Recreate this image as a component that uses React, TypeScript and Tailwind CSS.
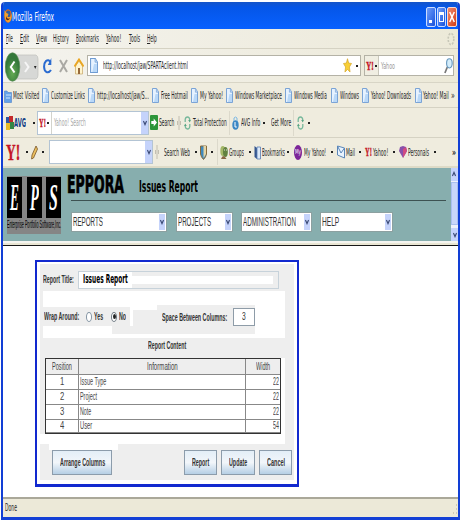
import React, { useLayoutEffect, useRef } from "react";
import { clsx } from "clsx";

/* One line of text, condensed horizontally to fill the width of its box. */
function T({ className, children }: { className?: string; children: React.ReactNode }) {
  const box = useRef<HTMLDivElement>(null);
  const inner = useRef<HTMLSpanElement>(null);
  useLayoutEffect(() => {
    const fit = () => {
      if (!box.current || !inner.current) return;
      inner.current.style.transform = `scaleX(${box.current.clientWidth / inner.current.offsetWidth})`;
    };
    fit();
    document.fonts?.ready.then(fit);
  }, []);
  return (
    <div ref={box} className={clsx("flex shrink-0 items-center whitespace-nowrap", className)}>
      <span ref={inner} className="block shrink-0 origin-left">{children}</span>
    </div>
  );
}

const Dot = ({ className }: { className?: string }) => (
  <span className={clsx("h-[2px] w-[2px] shrink-0 bg-[#222]", className)} />
);

const PageIcon = ({ className }: { className?: string }) => (
  <svg viewBox="0 0 7 15" preserveAspectRatio="none" className={clsx("h-[15px] w-[7px] shrink-0", className)}>
    <path d="M.5.5H4.6L6.5 4V14.5H.5Z" fill="#e6f2ff" stroke="#6e9bd2" strokeWidth=".9" />
    <path d="M4.4.8V4.2H6.3" fill="#bcd8f6" stroke="#6e9bd2" strokeWidth=".6" />
    <path d="M3.5 6H6V14H2Z" fill="#b9d8f8" />
  </svg>
);

const YMark = ({ className }: { className?: string }) => (
  <span className={clsx("flex shrink-0 items-center font-['Liberation_Serif',serif] font-bold text-[#c41425] [-webkit-text-stroke:0.4px_#c41425]", className)}>
    <T className="w-full">Y!</T>
  </span>
);

const Arrow = ({ className }: { className?: string }) => (
  <span className={clsx("flex shrink-0 items-center justify-center bg-[#c5d3fb]", className)}>
    <svg viewBox="0 0 4 6" preserveAspectRatio="none" className="h-[6px] w-[4px]">
      <path d="M.4 1 2 4.6 3.6 1" fill="none" stroke="#3d4c78" strokeWidth="1.2" />
    </svg>
  </span>
);

const Grip = ({ className }: { className?: string }) => (
  <svg viewBox="0 0 4 14" className={clsx("h-[14px] w-[4px] shrink-0", className)}>
    <path d="M2 0V14M.5 5V9M3.5 5V9" stroke="#bdbaac" strokeWidth=".9" />
  </svg>
);

const Recycle = ({ className }: { className?: string }) => (
  <svg viewBox="0 0 7 14" preserveAspectRatio="none" className={clsx("h-[14px] w-[7px] shrink-0", className)}>
    <path d="M1.2 6V3.5Q1.5 1 3.5 1Q5.5 1 5.8 4M5.8 8V10.5Q5.5 13 3.5 13Q1.5 13 1.2 10" fill="none" stroke="#77b89b" strokeWidth="1.3" />
    <path d="M4.2 4H7L5.7 6.5ZM0 10H2.8L1.3 7.5Z" fill="#58a583" />
  </svg>
);

function Select({ className, label, textWidth }: { className?: string; label: string; textWidth: string }) {
  return (
    <div className={clsx("flex h-[20px] shrink-0 border border-[#8ca0a0] bg-white text-[12px] text-[#333]", className)}>
      <T className={clsx("ml-[1px] h-[18px]", textWidth)}>{label}</T>
      <Arrow className="my-px ml-auto mr-px h-[16px] w-[6px]" />
    </div>
  );
}

function LogoLetter({ ch }: { ch: string }) {
  return (
    <div className="flex h-[41px] w-[15px] justify-center bg-black font-['Liberation_Serif',serif] text-[37px] font-bold italic text-white">
      <T className="h-[41px] w-[9px]">{ch}</T>
    </div>
  );
}

function Button({ className, text, label }: { className?: string; text: string; label: string }) {
  return (
    <button className={clsx("flex h-[25px] shrink-0 justify-center border border-[#8c9cab] bg-linear-to-b from-[#e3eef7] via-[#f2f6fa] to-[#b6cfe5] text-[11px] font-bold text-[#333]", className)}>
      <T className={clsx("h-[23px]", text)}>{label}</T>
    </button>
  );
}

const rows = [
  ["1", "Issue Type", "w-[26px]", "22"],
  ["2", "Project", "w-[17px]", "22"],
  ["3", "Note", "w-[11px]", "22"],
  ["4", "User", "w-[12px]", "54"],
];

export default function App() {
  return (
    <div className="h-[523px] w-[462px] overflow-hidden bg-white pl-[1px] pt-[2px] font-['DejaVu_Sans_Condensed','DejaVu_Sans',sans-serif] text-[10.5px] leading-none text-[#252525]">
      <div className="flex h-[518px] w-[459px] flex-col overflow-hidden rounded-t-[4px] border-x-2 border-b-[3px] border-[#123fd5] bg-white">
        {/* title bar */}
        <header className="flex h-[27px] shrink-0 bg-linear-to-b from-[#1454c8] via-[#0556e8] via-20% to-[#0861ff] pl-[1px] text-white">
          <svg viewBox="0 0 8 14" preserveAspectRatio="none" className="mt-[7px] h-[14px] w-[8px]">
            <ellipse cx="4" cy="7" rx="3.8" ry="6.7" fill="#e56b16" />
            <ellipse cx="4.2" cy="5" rx="2.2" ry="3.4" fill="#315b9b" />
            <path d="M.5 1 2.5 4 4.5 5 3.5 8 6.5 8 7.6 4Q8 13 4 13.6Q0 12 .5 1" fill="#f4a02c" />
            <path d="M2 7Q3 11 6 9Q4 13 2 10Z" fill="#5b2a16" />
          </svg>
          <T className="mt-[3px] h-[26px] w-[42px] text-[11.5px]">Mozilla Firefox</T>
          <div className="ml-auto mr-[1px] mt-[5px] flex gap-[1px]">
            <span className="h-[20px] w-[10px] rounded-[2px] border border-[#cbdcff] bg-linear-to-br from-[#6e9cfa] to-[#1650dc] pl-[2px] pt-[12px]">
              <i className="block h-[3px] w-[3px] bg-white" />
            </span>
            <span className="h-[20px] w-[9px] rounded-[2px] border border-[#cbdcff] bg-linear-to-br from-[#6e9cfa] to-[#1650dc] pl-[1px] pt-[4px]">
              <i className="block h-[10px] w-[5px] border border-t-[3px] border-white" />
            </span>
            <span className="h-[20px] w-[10px] rounded-[2px] border border-[#ffd8cc] bg-linear-to-br from-[#f08a6c] to-[#d13a10]">
              <svg viewBox="0 0 8 18" preserveAspectRatio="none" className="h-full w-full">
                <path d="M1.7 4 6.3 14M6.3 4 1.7 14" stroke="white" strokeWidth="1.5" />
              </svg>
            </span>
          </div>
        </header>

        {/* menu bar */}
        <nav className="flex h-[20px] shrink-0 border-b border-[#d5d2c3] bg-linear-to-r from-[#f4f3ee] to-[#ece9d8] pl-[3px]">
          <T className="w-[7px]"><u>F</u>ile</T>
          <T className="ml-[7px] w-[9px]"><u>E</u>dit</T>
          <T className="ml-[7px] w-[11px]"><u>V</u>iew</T>
          <T className="ml-[6px] w-[16px]">Hi<u>s</u>tory</T>
          <T className="ml-[7px] w-[23px]"><u>B</u>ookmarks</T>
          <T className="ml-[7px] w-[15px]"><u>Y</u>ahoo!</T>
          <T className="ml-[8px] w-[11px]"><u>T</u>ools</T>
          <T className="ml-[7px] w-[10px]"><u>H</u>elp</T>
          <svg viewBox="0 0 8 14" preserveAspectRatio="none" className="ml-auto mr-[3px] mt-[3px] h-[14px] w-[8px]">
            <ellipse cx="4" cy="7" rx="2.8" ry="5.6" fill="none" stroke="#c7c7b8" strokeWidth="1.6" strokeDasharray="2 1.4" />
          </svg>
        </nav>

        {/* navigation bar */}
        <div className="flex h-[34px] shrink-0 items-center border-b border-[#d8d5c6] bg-linear-to-r from-[#f4f3ee] to-[#ece9d8] pl-[2px]">
          <svg viewBox="0 0 34 30" className="mt-[3px] h-[30px] w-[34px] shrink-0 self-start">
            <defs>
              <radialGradient id="green" cx=".5" cy=".7">
                <stop stopColor="#67ac55" /><stop offset="1" stopColor="#34783a" />
              </radialGradient>
            </defs>
            <path d="M11 3H31Q33 4 33 7V23Q33 26 31 27H11Z" fill="#d7d8d6" stroke="#bfc0bc" strokeWidth=".7" />
            <ellipse cx="7.5" cy="15" rx="7.3" ry="14.3" fill="url(#green)" stroke="#5c8b58" strokeWidth=".6" />
            <path d="M9.5 9.5 5.8 15 9.5 20.5" fill="none" stroke="#fff" strokeWidth="2" />
            <path d="M20 10 23.5 15 20 20" fill="none" stroke="#f5f5f5" strokeWidth="2" />
            <path d="M29 14H31.5L30.2 17Z" fill="#222" />
          </svg>
          <svg viewBox="0 0 9 16" preserveAspectRatio="none" className="ml-[4px] h-[16px] w-[9px] shrink-0">
            <path d="M7.5 4Q5.5 1 3 3Q1 5 1.1 9Q1.3 13 3.5 14Q6 15 8 12" fill="none" stroke="#2a6bd0" strokeWidth="2" />
            <path d="M8.3 0V7H4.8Z" fill="#2a6bd0" />
          </svg>
          <svg viewBox="0 0 9 16" preserveAspectRatio="none" className="ml-[7px] h-[16px] w-[9px] shrink-0">
            <path d="M1 2 8 14M8 2 1 14" stroke="#aaa9a4" strokeWidth="2" />
          </svg>
          <svg viewBox="0 0 10 18" preserveAspectRatio="none" className="ml-[6px] h-[18px] w-[10px] shrink-0">
            <path d="M1.5 9V17H8.5V9L5 4Z" fill="#fff4cc" stroke="#c6a566" strokeWidth=".7" />
            <path d="M.5 9.5 5 2.5 9.5 9.5" fill="none" stroke="#eaa622" strokeWidth="1.8" />
            <path d="M4 11H6V17H4Z" fill="#96693b" />
          </svg>
          <div className="ml-[3px] flex h-[21px] w-[274px] shrink-0 items-center border border-[#b4b2a6] bg-white">
            <PageIcon className="ml-[2px] w-[8px]" />
            <T className="ml-[5px] w-[85px]">http://localhost/jaw/SPARTAclient.html</T>
            <svg viewBox="0 0 8 15" preserveAspectRatio="none" className="ml-auto h-[15px] w-[9px]">
              <path d="M4 .7 5 5 7.6 5.5 5.7 9 6.3 14 4 11.5 1.7 14 2.3 9 .4 5.5 3 5Z" fill="#f8cf36" stroke="#d2a020" strokeWidth=".6" />
            </svg>
            <Dot className="ml-[4px] mr-[2px]" />
          </div>
          <div className="ml-[3px] flex h-[21px] w-[90px] shrink-0 items-center border border-[#b4b2a6] bg-white">
            <div className="flex h-full w-[14px] items-center border-r border-[#c9c7bb] bg-[#f0eee2]">
              <YMark className="ml-[1px] w-[8px] text-[13px]" />
              <Dot className="ml-[1px]" />
            </div>
            <T className="ml-[2px] w-[14px] text-[9.5px] text-[#999]">Yahoo</T>
            <svg viewBox="0 0 8 16" preserveAspectRatio="none" className="ml-auto h-[16px] w-[9px]">
              <path d="M3 9 .8 15" stroke="#777" strokeWidth="1.5" />
              <ellipse cx="4.8" cy="5.3" rx="2.5" ry="4.6" fill="#d4edfb" stroke="#6697bd" />
            </svg>
          </div>
        </div>

        {/* bookmarks bar */}
        <div className="flex h-[25px] shrink-0 items-center border-b border-[#d5d2c3] bg-[#efecde] pl-[1px] pt-[1px]">
          <svg viewBox="0 0 8 14" preserveAspectRatio="none" className="h-[14px] w-[8px] shrink-0">
            <path d="M.5 2H3L4 3.5H7.5V13.5H.5Z" fill="#65a2e8" stroke="#4d82c8" strokeWidth=".6" />
            <path d="M2 6H7M2 9H6" stroke="#cfe5ff" />
          </svg>
          <T className="ml-[1px] w-[26px]">Most Visited</T>
          <PageIcon className="ml-[3px]" /><T className="ml-[2px] w-[34px]">Customize Links</T>
          <PageIcon className="ml-[3px]" /><T className="ml-[2px] w-[52px]">http://localhost/jaw/S...</T>
          <PageIcon className="ml-[3px]" /><T className="ml-[2px] w-[27px]">Free Hotmail</T>
          <PageIcon className="ml-[3px]" /><T className="ml-[2px] w-[23px]">My Yahoo!</T>
          <PageIcon className="ml-[3px]" /><T className="ml-[2px] w-[47px]">Windows Marketplace</T>
          <PageIcon className="ml-[3px]" /><T className="ml-[2px] w-[33px]">Windows Media</T>
          <PageIcon className="ml-[4px]" /><T className="ml-[2px] w-[19px]">Windows</T>
          <PageIcon className="ml-[3px]" /><T className="ml-[2px] w-[40px]">Yahoo! Downloads</T>
          <PageIcon className="ml-[4px]" /><T className="ml-[1px] w-[26px]">Yahoo! Mail</T>
          <T className="ml-[2px] w-[4px]">»</T>
        </div>

        {/* AVG toolbar */}
        <div className="flex h-[30px] shrink-0 items-center border-b border-[#d5d2c3] bg-[#efecde] pl-[3px]">
          <svg viewBox="0 0 8 14" preserveAspectRatio="none" className="h-[14px] w-[8px] shrink-0">
            <path d="M0 7H4V14H0Z" fill="#e8b926" /><path d="M0 1H4V7H0Z" fill="#2d54a3" />
            <path d="M3 0H7V6H3Z" fill="#c52a2a" /><path d="M4 6H8V13H4Z" fill="#348645" />
          </svg>
          <T className="w-[12px] text-[13px] font-bold text-[#123e85]">AVG</T>
          <Dot className="ml-[7px]" />
          <div className="ml-[2px] flex h-[24px] w-[112px] shrink-0 items-center border border-[#b3c4d4] bg-white">
            <YMark className="ml-[1px] w-[7px] text-[12px]" />
            <Dot className="ml-[1px]" />
            <span className="ml-[2px] h-full w-px bg-[#d3d3cc]" />
            <T className="ml-[2px] w-[32px] text-[#a8a8a8]">Yahoo! Search</T>
            <Arrow className="ml-auto h-full w-[7px]" />
          </div>
          <svg viewBox="0 0 8 15" preserveAspectRatio="none" className="ml-[1px] h-[15px] w-[8px] shrink-0">
            <rect width="8" height="15" rx="1" fill="#2d9539" />
            <path d="M1.3 6H3.7V3.5L7 7.5 3.7 11.5V9H1.3Z" fill="#fff" />
          </svg>
          <T className="ml-[1px] w-[15px]">Search</T>
          <Grip className="ml-[3px]" />
          <Recycle className="ml-[3px]" />
          <T className="ml-[2px] w-[34px]">Total Protection</T>
          <span className="ml-[2px] h-[24px] w-px bg-[#dcd9cb]" />
          <svg viewBox="0 0 7 14" preserveAspectRatio="none" className="ml-[2px] h-[14px] w-[7px] shrink-0">
            <ellipse cx="3.5" cy="9" rx="3.2" ry="4.7" fill="#3b87c4" />
            <path d="M2 5V2Q3.5 0 5 2V5" fill="none" stroke="#7cb8e3" /><path d="M3 6V11H4.8" stroke="white" fill="none" />
          </svg>
          <T className="ml-[2px] w-[19px]">AVG Info</T>
          <Dot className="ml-[3px]" />
          <T className="ml-[6px] w-[20px]">Get More</T>
          <span className="ml-[2px] h-[26px] w-px bg-[#dcd9cb]" />
          <Recycle className="ml-[3px]" />
          <Dot className="ml-[4px]" />
        </div>

        {/* Yahoo toolbar */}
        <div className="flex h-[30px] shrink-0 items-center border-b-2 border-[#dedbc7] bg-[#efecde] pl-[3px]">
          <YMark className="w-[14px] text-[24px]" />
          <Dot className="ml-[6px]" />
          <svg viewBox="0 0 7 15" preserveAspectRatio="none" className="ml-[3px] h-[15px] w-[7px] shrink-0">
            <path d="M5 1 6.5 4 2.5 13 .6 14 1 10Z" fill="#edc15f" stroke="#765326" strokeWidth=".8" />
          </svg>
          <Dot className="ml-[4px]" />
          <div className="ml-[5px] flex h-[24px] w-[104px] shrink-0 border border-[#b3c4d4] bg-white">
            <Arrow className="ml-auto h-full w-[7px]" />
          </div>
          <Grip className="ml-[2px]" />
          <T className="ml-[5px] w-[26px]">Search Web</T>
          <Dot className="ml-[5px]" />
          <svg viewBox="0 0 7 15" preserveAspectRatio="none" className="ml-[3px] h-[15px] w-[7px] shrink-0">
            <path d="M.5 1H6.5V9Q6 12 3.5 14.5Q1 12 .5 9Z" fill="#3e89bd" stroke="#866b3d" />
            <path d="M3.5 1H6V9Q5 11 3.5 13Z" fill="#e5d5a5" />
          </svg>
          <Dot className="ml-[4px]" />
          <span className="ml-[4px] h-[26px] w-px bg-[#dcd9cb]" />
          <svg viewBox="0 0 8 15" preserveAspectRatio="none" className="ml-[2px] h-[15px] w-[8px] shrink-0">
            <ellipse cx="2.8" cy="6" rx="2.5" ry="5" fill="#a5b868" /><ellipse cx="5.4" cy="7" rx="2.4" ry="5" fill="#62813f" />
            <path d="M1 14Q3 8 6.5 14" fill="#8a6743" /><path d="M4 5H4.8M6 5H6.8" stroke="#fff" />
          </svg>
          <T className="ml-[1px] w-[15px]">Groups</T>
          <Dot className="ml-[5px]" />
          <svg viewBox="0 0 7 15" preserveAspectRatio="none" className="ml-[3px] h-[15px] w-[7px] shrink-0">
            <path d="M.5 1 3 3V14L.5 12Z" fill="#37578e" /><path d="M3 2H6.5V14H3Z" fill="#dce9f8" stroke="#577bb2" strokeWidth=".8" />
          </svg>
          <T className="ml-[1px] w-[23px]">Bookmarks</T>
          <Dot className="ml-[2px]" />
          <span className="ml-[5px] flex h-[15px] w-[8px] shrink-0 items-center rounded-[50%] bg-[#7c2599] text-[7px] text-white">
            <T className="ml-[1px] w-[6px]">My</T>
          </span>
          <T className="ml-[2px] w-[22px]">My Yahoo!</T>
          <Dot className="ml-[5px]" />
          <svg viewBox="0 0 8 14" preserveAspectRatio="none" className="ml-[4px] h-[14px] w-[8px] shrink-0">
            <path d="M.5 1 7.5 3V13L.5 10Z" fill="#e9f4ff" stroke="#5b86b8" /><path d="M.5 1 4 8 7.5 3" fill="none" stroke="#5b86b8" />
          </svg>
          <T className="ml-[1px] w-[9px]">Mail</T>
          <Dot className="ml-[4px]" />
          <YMark className="ml-[4px] w-[7px] text-[12px]" />
          <T className="ml-[1px] w-[15px]">Yahoo!</T>
          <Dot className="ml-[5px]" />
          <svg viewBox="0 0 8 14" preserveAspectRatio="none" className="ml-[4px] h-[14px] w-[8px] shrink-0">
            <path d="M4 13 0 6 1 2 4 1 7 2 8 6Z" fill="#8750ab" /><path d="M4 13V4L7 2 8 6Z" fill="#d04a82" />
          </svg>
          <T className="ml-[1px] w-[21px]">Personals</T>
          <Dot className="ml-[5px]" />
          <T className="ml-auto mr-[2px] w-[4px] font-bold">»</T>
        </div>

        {/* application header */}
        <div className="flex h-[73px] shrink-0 bg-[#87aeae] font-['Liberation_Sans',Arial,sans-serif]">
          <div className="ml-[4px] mt-[8px] h-[58px] w-[54px] bg-[#858585]">
            <div className="flex justify-between pt-[1px]">
              <LogoLetter ch="E" /><LogoLetter ch="P" /><LogoLetter ch="S" />
            </div>
            <T className="h-[13px] w-[54px] text-[10px] text-black">Enterprise Portfolio Software,Inc.</T>
          </div>
          <div className="ml-[6px] w-[383px]">
            <div className="flex h-[32px] items-center text-black">
              <T className="mt-[2px] w-[57px] font-['DejaVu_Sans',sans-serif] text-[24px] font-bold [-webkit-text-stroke:0.7px_black]">EPPORA</T>
              <T className="ml-[15px] mt-[6px] w-[59px] font-['DejaVu_Sans',sans-serif] text-[15px] font-bold">Issues Report</T>
            </div>
            <div className="ml-[4px] mr-[4px] h-px bg-[#3d5252]" />
            <div className="ml-[4px] mt-[11px] flex">
              <Select className="w-[96px]" label="REPORTS" textWidth="w-[30px]" />
              <Select className="ml-[9px] w-[57px]" label="PROJECTS" textWidth="w-[33px]" />
              <Select className="ml-[8px] w-[71px]" label="ADMINISTRATION" textWidth="w-[53px]" />
              <Select className="ml-[8px] w-[73px]" label="HELP" textWidth="w-[17px]" />
            </div>
          </div>
          <div className="ml-auto flex w-[7px] flex-col bg-[#eef1fb]">
            <Arrow className="h-[13px] w-[7px] rotate-180" />
            <span className="mt-[1px] h-[43px] w-[7px] border border-[#a9bff0] bg-[#c8d6fb]" />
            <Arrow className="mt-auto h-[13px] w-[7px]" />
          </div>
        </div>
        <div className="h-[5px] shrink-0 border-b border-t-2 border-b-[#181818] border-t-[#f5f5f0] bg-[#e9e6d4]" />

        {/* page */}
        <main className="h-[251px] shrink-0 pl-[32px] pt-[14px] font-['Liberation_Sans',Arial,sans-serif] text-[#333]">
          <section className="h-[227px] w-[264px] border-2 border-b-[3px] border-[#1229cf] bg-white pl-[3px] pt-[2px]">
            <div className="h-[216px] w-[254px] bg-[#eeeeee]">
              <div className="flex h-[27px] items-start pl-[3px] pt-[7px]">
                <T className="h-[17px] w-[31px] text-[10.5px] font-bold">Report Title:</T>
                <div className="ml-[4px] flex h-[18px] w-[201px] items-center border border-[#c7d2da]">
                  <div className="flex h-full w-[53px] items-center bg-white pl-[4px]">
                    <T className="w-[45px] font-['DejaVu_Sans',sans-serif] text-[11.5px] font-bold text-black">Issues Report</T>
                  </div>
                  <div className="h-[8px] w-[141px] bg-white" />
                </div>
              </div>

              <div className="ml-[3px] flex h-[47px] w-[242px] flex-col bg-white">
                <div className="flex h-[35px] pt-[16px]">
                  <div className="flex h-[19px] w-[87px] items-center bg-[#eee] pl-[1px] text-[10.5px] font-bold">
                    <T className="w-[35px]">Wrap Around:</T>
                    <span className="ml-[7px] h-[10px] w-[6px] rounded-[50%] border border-[#8394a3] bg-white" />
                    <T className="ml-[2px] w-[9px]">Yes</T>
                    <span className="ml-[8px] flex h-[10px] w-[6px] items-center justify-center rounded-[50%] border border-[#717b84] bg-white">
                      <i className="h-[5px] w-[3px] rounded-[50%] bg-[#222]" />
                    </span>
                    <T className="ml-[2px] w-[7px]">No</T>
                  </div>
                  <div className="ml-[3px] mt-[3px] h-[16px] w-[24px] bg-[#eee]" />
                  <div className="-mt-[2px] flex h-[21px] w-[98px] items-center bg-[#eee] pl-[5px] pt-[3px] text-[10.5px] font-bold">
                    <T className="w-[65px]">Space Between Columns:</T>
                    <div className="ml-[6px] flex h-[18px] w-[22px] items-center justify-center border border-[#8e9ca8] bg-white text-[10px] font-normal">
                      <T className="w-[4px]">3</T>
                    </div>
                  </div>
                </div>
                <div className="ml-[69px] h-[8px] w-[143px] bg-[#eee]" />
              </div>

              <div className="flex h-[20px] justify-center pr-[8px] text-[10.5px] font-bold">
                <T className="mr-[-7px] h-[14px] w-[38px]">Report Content</T>
              </div>

              <div className="w-[245px]">
                <div className="flex bg-[#eee]">
                  <div className="ml-[5px] grid h-[76px] w-[236px] shrink-0 grid-cols-[33px_167px_34px] grid-rows-[16px_15px_15px_15px_13px] border border-[#333] bg-[#999] text-[11.5px] text-[#444]">
                    <div className="flex justify-center border-b border-r border-[#888] bg-[#eee]"><T className="w-[20px]">Position</T></div>
                    <div className="flex justify-center border-b border-r border-[#888] bg-[#eee]"><T className="w-[31px]">Information</T></div>
                    <div className="flex justify-center border-b border-[#888] bg-[#eee]"><T className="w-[14px]">Width</T></div>
                    {rows.map(([n, name, w, width]) => (
                      <React.Fragment key={n}>
                        <div className="flex justify-center border-b border-r border-[#888] bg-white"><T className="w-[4px]">{n}</T></div>
                        <div className="flex border-b border-r border-[#888] bg-white pl-px"><T className={w}>{name}</T></div>
                        <div className="flex justify-end border-b border-[#888] bg-white pr-px"><T className="w-[6px]">{width}</T></div>
                      </React.Fragment>
                    ))}
                  </div>
                  <div className="w-[4px] bg-white" />
                </div>
                <div className="h-[10px] bg-white" />
              </div>

              <div className="ml-[9px] h-[6px] w-[69px] bg-white" />
              <div className="flex pl-[12px]">
                <Button className="w-[60px]" text="w-[45px]" label="Arrange Columns" />
                <Button className="ml-[72px] w-[33px]" text="w-[17px]" label="Report" />
                <Button className="ml-[4px] w-[34px]" text="w-[18px]" label="Update" />
                <Button className="ml-[4px] w-[33px]" text="w-[18px]" label="Cancel" />
              </div>
            </div>
          </section>
        </main>

        {/* status bar */}
        <footer className="flex flex-1 border-t-2 border-[#aaa899] bg-[#ece9d8] pl-[2px]">
          <T className="h-[17px] w-[12px]">Done</T>
          <svg viewBox="0 0 6 14" className="ml-auto mt-[4px] h-[14px] w-[6px]">
            <path d="M4 2H5M4 6H5M4 10H5M1 10H2" stroke="#c3bfac" strokeWidth="1.5" />
          </svg>
        </footer>
      </div>
    </div>
  );
}
